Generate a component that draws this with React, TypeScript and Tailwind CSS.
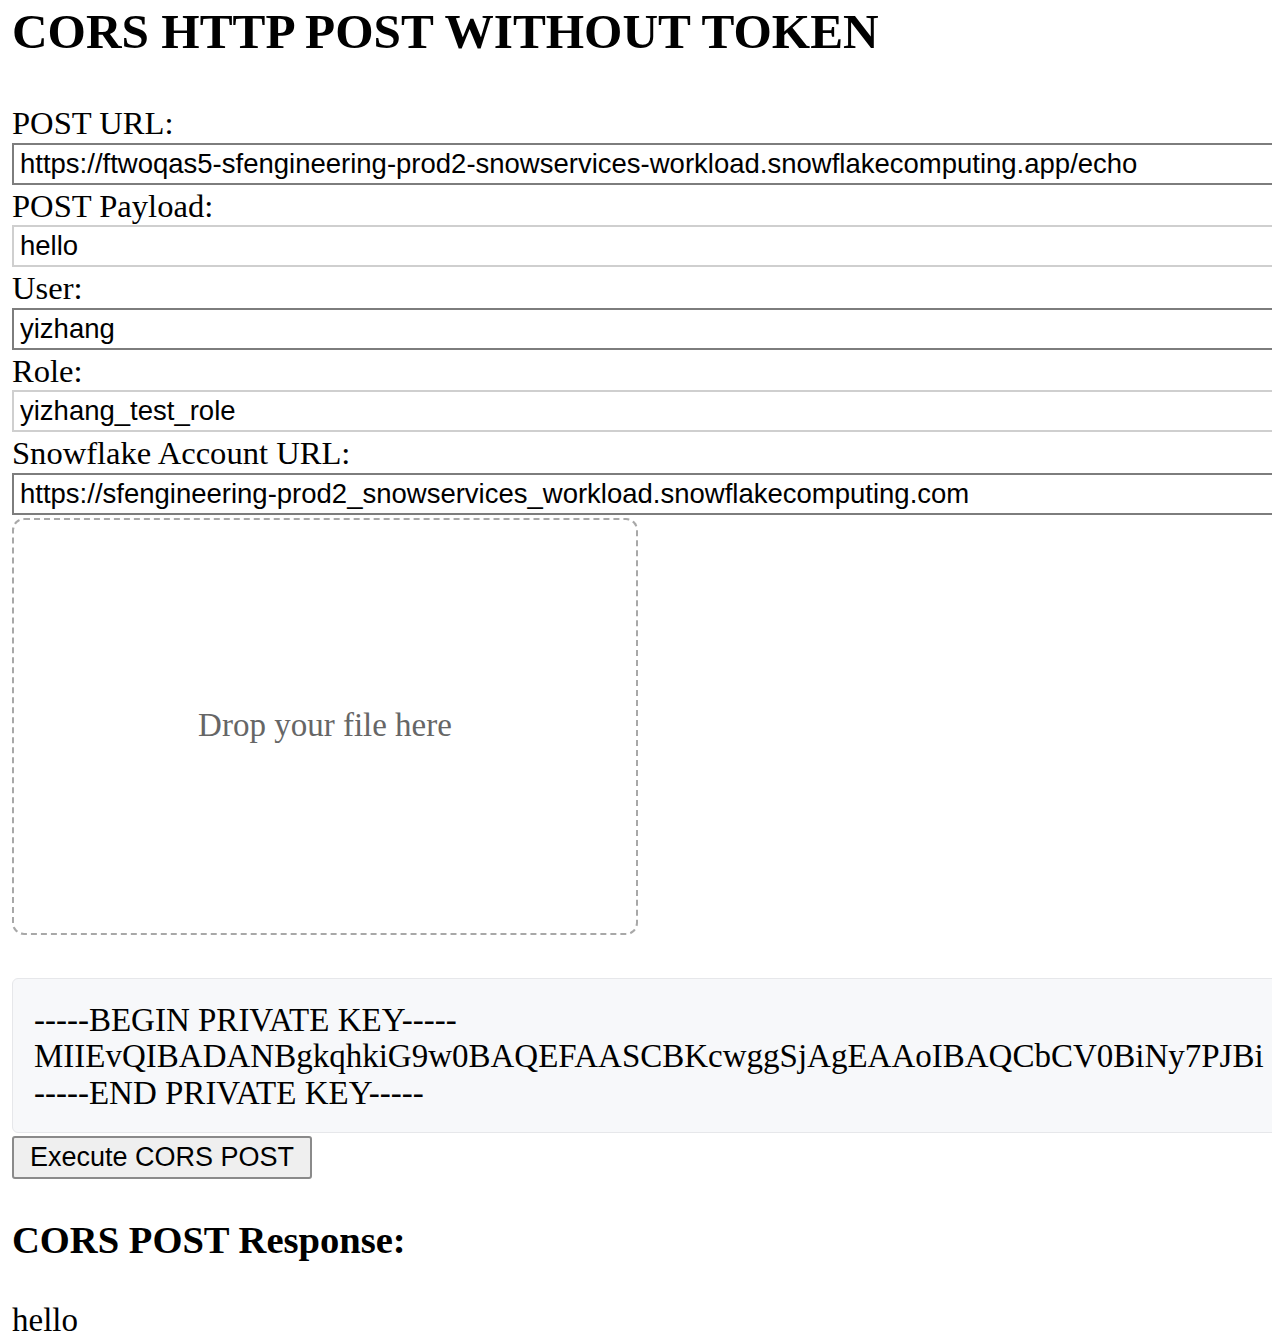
import React from "react";

const serif = "font-['Liberation_Serif','Times_New_Roman',serif]";
const sans = "font-['Liberation_Sans',Arial,sans-serif]";

function Field({ label, value, dark }: { label: string; value: string; dark: boolean }) {
  return (
    <div className="flex flex-col">
      <div className={`h-[37.5px] whitespace-nowrap text-[32.6px] leading-[37.5px] text-black ${serif}`}>{label}</div>
      <input
        readOnly
        value={value}
        className={`mb-[3px] box-border h-[42px] w-[1300px] border-2 bg-white px-[6px] text-[27.5px] text-black outline-none ${sans} ${
          dark ? "border-[#7d7d7d]" : "border-[#cfcfcf]"
        }`}
      />
    </div>
  );
}

export default function App() {
  return (
    <div className={`box-border h-[1344px] w-full overflow-hidden bg-white pl-[12px] text-black ${serif}`}>
      <h1 className="whitespace-nowrap pt-[4px] text-[49.3px] font-bold leading-[56px]">CORS HTTP POST WITHOUT TOKEN</h1>
      <div className="mt-[45px] flex flex-col">
        <Field
          label="POST URL:"
          value="https://ftwoqas5-sfengineering-prod2-snowservices-workload.snowflakecomputing.app/echo"
          dark
        />
        <Field label="POST Payload:" value="hello" dark={false} />
        <Field label="User:" value="yizhang" dark />
        <Field label="Role:" value="yizhang_test_role" dark={false} />
        <Field
          label="Snowflake Account URL:"
          value="https://sfengineering-prod2_snowservices_workload.snowflakecomputing.com"
          dark
        />
      </div>
      <div className="box-border flex h-[417px] w-[626px] items-center justify-center rounded-[12px] border-2 border-dashed border-[#a8a8a8]">
        <span className="text-[33px] text-[#666666]">Drop your file here</span>
      </div>
      <div className="mt-[43px] box-border h-[155px] w-[1300px] whitespace-nowrap rounded-[6px] border border-[#e6e7ea] bg-[#f7f8fa] pl-[21px] pt-[23px] text-[33px] leading-[36.5px]">
        <div>-----BEGIN PRIVATE KEY-----</div>
        <div>MIIEvQIBADANBgkqhkiG9w0BAQEFAASCBKcwggSjAgEAAoIBAQCbCV0BiNy7PJBi</div>
        <div>-----END PRIVATE KEY-----</div>
      </div>
      <button
        className={`mt-[3px] box-border block h-[43px] w-[300px] whitespace-nowrap rounded-[3px] border-2 border-[#8a8a8a] bg-[#efefef] px-[14px] text-center text-[27px] leading-[39px] text-black ${sans}`}
      >
        Execute CORS POST
      </button>
      <h3 className="mt-[40px] whitespace-nowrap text-[38.6px] font-bold leading-[43px]">CORS POST Response:</h3>
      <div className="mt-[40px] text-[33px] leading-[37px]">hello</div>
    </div>
  );
}
